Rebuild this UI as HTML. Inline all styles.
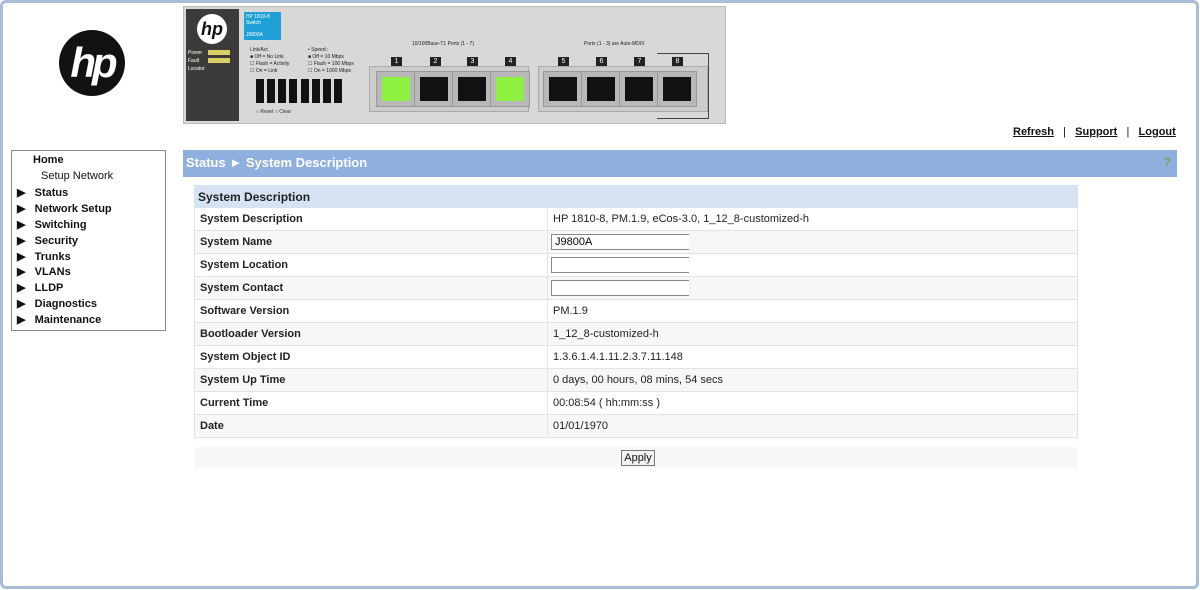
<!DOCTYPE html>
<html><head><meta charset="utf-8"><style>
*{box-sizing:border-box;margin:0;padding:0}
body{width:1200px;height:590px;background:#fff;font-family:"Liberation Sans",Arial,sans-serif;position:relative;overflow:hidden}
.frame{position:absolute;left:0;top:0;width:1199px;height:589px;border:3px solid #a9bcd8;border-radius:6px}
.abs{position:absolute}
.logo{left:59px;top:30px;width:66px;height:66px;border-radius:50%;background:#111;color:#fff;font:italic bold 42px/66px "Liberation Sans",sans-serif;text-align:center;letter-spacing:-4px}
.banner{left:183px;top:6px;width:543px;height:118px;background:#d8d8d8;border:1px solid #bbb}
.nav{left:11px;top:150px;width:155px;height:181px;border:1px solid #888;font-size:11px;font-weight:bold;color:#111}
.nav div{position:absolute;white-space:nowrap}
.bar{left:183px;top:150px;width:994px;height:27px;background:#8fafdf;color:#fff;font-weight:bold;font-size:13px;line-height:25px;padding-left:3px}
.links{top:126px;font-size:11px;font-weight:bold;color:#111}
.links a{text-decoration:underline;color:#111}
table{position:absolute;left:194px;top:185px;width:884px;border-collapse:collapse;font-size:11px;color:#222}
td{height:23px;border:1px solid #dfe4ea;padding-left:5px;padding-top:0;padding-bottom:0}
td.l{width:353px;font-weight:bold}
tr.h td{height:22px;background:#d5e3f3;font-size:12px;font-weight:bold;padding-left:3px;border-color:#d5e3f3}
tr.g td{background:#f7f7f7}
input{width:138px;height:16px;border:1px solid #888;border-right:none;font:11px "Liberation Sans",sans-serif;padding-left:3px;margin-left:-2px;display:block}
.port{position:absolute;width:40px;height:36px;background:#b8b8b8;border:1px solid #999}
.port i{position:absolute;left:5px;top:5px;width:28px;height:24px;background:#111}
.num{position:absolute;width:11px;height:9px;background:#222;color:#fff;font-size:7px;text-align:center;line-height:9px}
</style></head><body>
<div class="frame"></div>
<div class="abs logo">hp</div>

<div class="abs banner">
 <div class="abs" style="left:2px;top:2px;width:53px;height:112px;background:#3d3b39"></div>
 <div class="abs" style="left:13px;top:7px;width:30px;height:30px;border-radius:50%;background:#fff;color:#111;font:italic bold 18px/30px sans-serif;text-align:center">hp</div>
 <div class="abs" style="left:4px;top:42px;font-size:5px;color:#fff;line-height:8px">Power<br>Fault<br>Locator</div>
 <div class="abs" style="left:24px;top:43px;width:22px;height:5px;background:#d8d060"></div>
 <div class="abs" style="left:24px;top:51px;width:22px;height:5px;background:#d8d060"></div>
 <div class="abs" style="left:60px;top:5px;width:37px;height:28px;background:#1fa0d8;color:#fff;font-size:5px;padding:2px">HP 1810-8<br>Switch<br><br>J9800A</div>
 <div class="abs" style="left:66px;top:40px;font-size:5px;color:#222;line-height:7px">Link/Act<br>■ Off = No Link<br>☐ Flash = Activity<br>☐ On = Link</div>
 <div class="abs" style="left:124px;top:40px;font-size:5px;color:#222;line-height:7px">• Speed :<br>■ Off = 10 Mbps<br>☐ Flash = 100 Mbps<br>☐ On = 1000 Mbps</div>
 <div class="abs" style="left:228px;top:34px;font-size:5px;color:#222">10/100Base-T1 Ports (1 - 7)</div>
 <div class="abs" style="left:400px;top:34px;font-size:5px;color:#222">Ports (1 - 3) are Auto-MDIX</div>
 <div class="abs" style="left:62px;top:72px;width:112px;height:24px">
  <div class="abs" style="left:10px;top:0;width:8px;height:24px;background:#111"></div><div class="abs" style="left:21px;top:0;width:8px;height:24px;background:#111"></div><div class="abs" style="left:32px;top:0;width:8px;height:24px;background:#111"></div><div class="abs" style="left:43px;top:0;width:8px;height:24px;background:#111"></div><div class="abs" style="left:55px;top:0;width:8px;height:24px;background:#111"></div><div class="abs" style="left:66px;top:0;width:8px;height:24px;background:#111"></div><div class="abs" style="left:77px;top:0;width:8px;height:24px;background:#111"></div><div class="abs" style="left:88px;top:0;width:8px;height:24px;background:#111"></div>
 </div>
 <div class="abs" style="left:72px;top:102px;font-size:5px;color:#333">○ Reset ○ Clear</div>
 <div class="abs" style="left:185px;top:59px;width:160px;height:46px;background:#ccc;border:1px solid #aaa"></div>
 <div class="abs" style="left:354px;top:59px;width:170px;height:46px;background:#ccc;border:1px solid #aaa"></div>
 <div class="abs" style="left:473px;top:46px;width:52px;height:66px;border:1px solid #444;border-left:none"></div>
 <div class="num" style="left:207px;top:50px">1</div><div class="num" style="left:246px;top:50px">2</div><div class="num" style="left:283px;top:50px">3</div><div class="num" style="left:321px;top:50px">4</div>
 <div class="num" style="left:374px;top:50px">5</div><div class="num" style="left:412px;top:50px">6</div><div class="num" style="left:450px;top:50px">7</div><div class="num" style="left:488px;top:50px">8</div>
 <div class="port" style="left:192px;top:64px"><i style="background:#8ef040"></i></div>
 <div class="port" style="left:230px;top:64px"><i></i></div>
 <div class="port" style="left:268px;top:64px"><i></i></div>
 <div class="port" style="left:306px;top:64px"><i style="background:#8ef040"></i></div>
 <div class="port" style="left:359px;top:64px"><i></i></div>
 <div class="port" style="left:397px;top:64px"><i></i></div>
 <div class="port" style="left:435px;top:64px"><i></i></div>
 <div class="port" style="left:473px;top:64px"><i></i></div>
</div>

<div class="abs links" style="left:1013px">
 <a>Refresh</a>&nbsp;&nbsp;&nbsp;<span style="font-weight:normal">|</span>&nbsp;&nbsp;&nbsp;<a>Support</a>&nbsp;&nbsp;&nbsp;<span style="font-weight:normal">|</span>&nbsp;&nbsp;&nbsp;<a>Logout</a>
</div>

<div class="abs nav">
 <div style="left:21px;top:3px">Home</div>
 <div style="left:29px;top:19px;font-weight:normal">Setup Network</div>
 <div style="left:5px;top:35px">▶&nbsp;&nbsp;&nbsp;Status</div>
 <div style="left:5px;top:51px">▶&nbsp;&nbsp;&nbsp;Network Setup</div>
 <div style="left:5px;top:67px">▶&nbsp;&nbsp;&nbsp;Switching</div>
 <div style="left:5px;top:83px">▶&nbsp;&nbsp;&nbsp;Security</div>
 <div style="left:5px;top:99px">▶&nbsp;&nbsp;&nbsp;Trunks</div>
 <div style="left:5px;top:114px">▶&nbsp;&nbsp;&nbsp;VLANs</div>
 <div style="left:5px;top:130px">▶&nbsp;&nbsp;&nbsp;LLDP</div>
 <div style="left:5px;top:146px">▶&nbsp;&nbsp;&nbsp;Diagnostics</div>
 <div style="left:5px;top:162px">▶&nbsp;&nbsp;&nbsp;Maintenance</div>
</div>

<div class="abs bar">Status ► System Description<span style="position:absolute;right:6px;top:0;color:#7a5;font-size:12px">?</span></div>

<table>
<tr class="h"><td colspan="2">System Description</td></tr>
<tr><td class="l">System Description</td><td>HP 1810-8, PM.1.9, eCos-3.0, 1_12_8-customized-h</td></tr>
<tr class="g"><td class="l">System Name</td><td><input value="J9800A"></td></tr>
<tr><td class="l">System Location</td><td><input></td></tr>
<tr class="g"><td class="l">System Contact</td><td><input></td></tr>
<tr><td class="l">Software Version</td><td>PM.1.9</td></tr>
<tr class="g"><td class="l">Bootloader Version</td><td>1_12_8-customized-h</td></tr>
<tr><td class="l">System Object ID</td><td>1.3.6.1.4.1.11.2.3.7.11.148</td></tr>
<tr class="g"><td class="l">System Up Time</td><td>0 days, 00 hours, 08 mins, 54 secs</td></tr>
<tr><td class="l">Current Time</td><td>00:08:54 ( hh:mm:ss )</td></tr>
<tr class="g"><td class="l">Date</td><td>01/01/1970</td></tr>
</table>

<div class="abs" style="left:194px;top:447px;width:884px;height:21px;background:#f8f8f8"></div>
<div class="abs" style="left:621px;top:450px;width:34px;height:16px;border:1px solid #777;background:#f2f2f2;font-size:11px;text-align:center;line-height:14px;color:#111">Apply</div>
</body></html>
